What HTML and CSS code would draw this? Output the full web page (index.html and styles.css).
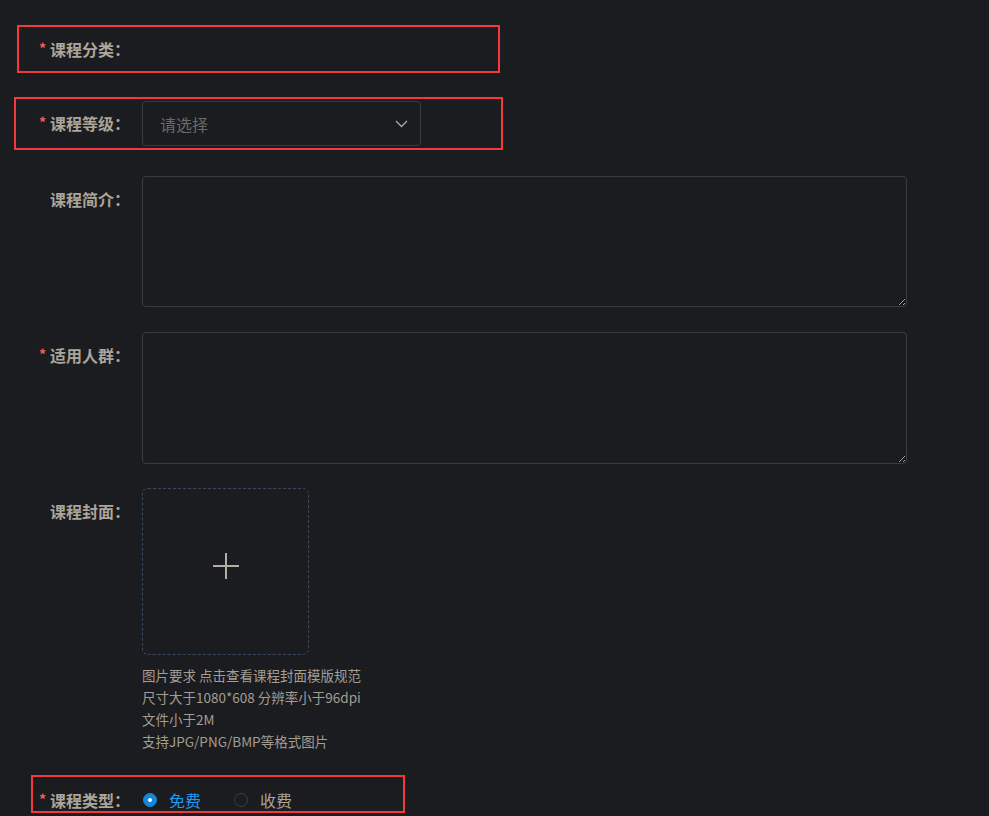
FILE: index.html
```html
<!DOCTYPE html>
<html lang="zh-CN">
<head>
<meta charset="utf-8">
<title>课程表单</title>
<link rel="stylesheet" href="styles.css">
</head>
<body>
<form class="form">
  <div class="item item-cat mark mark-cat">
    <label class="label"><span class="req">*</span>课程分类：</label>
  </div>

  <div class="item item-level mark mark-level">
    <label class="label"><span class="req">*</span>课程等级：</label>
    <div class="select">
      <span class="placeholder">请选择</span>
      <svg class="chevron" width="13" height="8" viewBox="0 0 13 8"><polyline points="1,1 6.5,6.5 12,1" fill="none" stroke="#a9a9a9" stroke-width="1.3"/></svg>
    </div>
  </div>

  <div class="item item-intro">
    <label class="label">课程简介：</label>
    <textarea class="textarea textarea-intro"></textarea>
  </div>

  <div class="item item-crowd">
    <label class="label"><span class="req">*</span>适用人群：</label>
    <textarea class="textarea textarea-crowd"></textarea>
  </div>

  <div class="item item-cover">
    <label class="label">课程封面：</label>
    <div class="cover">
      <div class="upload">
        <span class="plus"></span>
      </div>
      <ul class="hint">
        <li>图片要求 点击查看课程封面模版规范</li>
        <li>尺寸大于1080*608 分辨率小于96dpi</li>
        <li>文件小于2M</li>
        <li>支持JPG/PNG/BMP等格式图片</li>
      </ul>
    </div>
  </div>

  <div class="item item-type mark mark-type">
    <label class="label"><span class="req">*</span>课程类型：</label>
    <div class="radios">
      <span class="radio checked"><span class="dot"></span><span class="radio-text">免费</span></span>
      <span class="radio"><span class="dot"></span><span class="radio-text">收费</span></span>
    </div>
  </div>
</form>
</body>
</html>
```

FILE: styles.css
```css
html, body {
  margin: 0;
  padding: 0;
  background: #1b1c1f;
  height: 100%;
  overflow: hidden;
}

body {
  font-family: "Noto Sans CJK SC", "Noto Sans", sans-serif;
  color: #aba59a;
}

.form {
  padding-top: 27px;
  margin: 0;
}

.item {
  display: flex;
  align-items: flex-start;
  position: relative;
}

.label {
  width: 142px;
  flex-shrink: 0;
  box-sizing: border-box;
  padding-right: 12px;
  text-align: right;
  font-size: 16px;
  font-weight: bold;
  line-height: 44px;
  color: #aba59a;
  white-space: nowrap;
}

.req {
  color: #f0605a;
  font-size: 14px;
  margin-right: 4px;
  position: relative;
  top: -2px;
}

.item-cat { height: 44px; margin-bottom: 30px; }
.item-level { height: 44px; margin-bottom: 31px; }
.item-intro { margin-bottom: 25px; }
.item-crowd { margin-bottom: 24px; }
.item-cover { margin-bottom: 26px; }
.item-type { height: 44px; }

.item-intro .label,
.item-crowd .label,
.item-cover .label { line-height: 46px; }

/* annotation outlines */
.mark::after {
  content: "";
  position: absolute;
  border: 2px solid #f5393b;
  box-sizing: border-box;
  pointer-events: none;
}
.mark-cat::after { left: 17px; width: 483px; top: -2px; height: 48px; }
.mark-level::after { left: 14px; width: 489px; top: -4px; height: 53px; }
.mark-type::after { left: 31px; width: 374px; top: -3px; height: 38px; }

.select {
  width: 279px;
  height: 45px;
  box-sizing: border-box;
  border: 1px solid #3a3b3f;
  border-radius: 4px;
  display: flex;
  align-items: center;
  justify-content: space-between;
  padding: 0 12px 0 17px;
}

.placeholder {
  font-size: 16px;
  color: #6a6a6a;
}

.chevron { display: block; }

.textarea {
  display: block;
  width: 765px;
  box-sizing: border-box;
  background: #1b1c1f;
  border: 1px solid #3a3b3f;
  border-radius: 4px;
  color: #aba59a;
  color-scheme: dark;
  margin: 0;
  padding: 6px 10px;
  font-family: inherit;
  font-size: 14px;
  resize: vertical;
  outline: none;
}
.textarea-intro { height: 131px; }
.textarea-crowd { height: 132px; }

.cover {
  display: flex;
  flex-direction: column;
}

.upload {
  width: 167px;
  height: 167px;
  box-sizing: border-box;
  border: 1px dashed #394a5e;
  border-radius: 6px;
  display: flex;
  align-items: center;
  justify-content: center;
}

.plus {
  width: 26px;
  height: 26px;
  position: relative;
  margin-top: -12px;
}
.plus::before,
.plus::after {
  content: "";
  position: absolute;
  background: #b3ada2;
}
.plus::before { left: 0; right: 0; top: 12px; height: 2px; }
.plus::after { top: 0; bottom: 0; left: 12px; width: 2px; }

.hint {
  list-style: none;
  margin: 9px 0 0;
  padding: 0;
  font-size: 13.5px;
  line-height: 22px;
  color: #a39d93;
  white-space: nowrap;
}

.radios {
  display: flex;
  align-items: center;
  height: 44px;
}

.radio {
  display: flex;
  align-items: center;
  margin-right: 33px;
  margin-left: 1px;
}
.radio + .radio { margin-left: 0; }

.dot {
  width: 14px;
  height: 14px;
  box-sizing: border-box;
  border-radius: 50%;
  border: 1px solid #3b3c40;
  margin-right: 12px;
  position: relative;
}
.radio.checked .dot {
  background: #1687dc;
  border-color: #1687dc;
}
.radio.checked .dot::after {
  content: "";
  position: absolute;
  width: 4px;
  height: 4px;
  border-radius: 50%;
  background: #ffffff;
  left: 4px;
  top: 4px;
}

.radio-text {
  font-size: 16px;
  color: #aba59a;
}
.radio.checked .radio-text { color: #1b9cf2; }
```
